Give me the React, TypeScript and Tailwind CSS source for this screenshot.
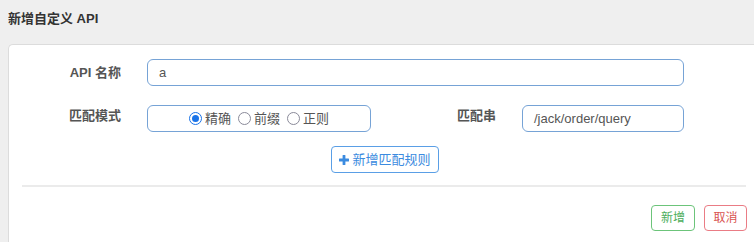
import React from "react";

const font = { fontFamily: '"Liberation Sans", "Noto Sans CJK SC", sans-serif' };

function Radio({ label, checked }: { label: string; checked?: boolean }) {
  return (
    <label className="flex items-center gap-[3px] text-[13px] text-[#555]">
      <span
        className={`flex h-[13px] w-[13px] items-center justify-center rounded-full border ${
          checked ? "border-[#1a73e8]" : "border-[#8a8a99]"
        } bg-white`}
      >
        {checked && <span className="h-[7px] w-[7px] rounded-full bg-[#1a73e8]" />}
      </span>
      {label}
    </label>
  );
}

export default function App() {
  return (
    <div className="h-[242px] w-[754px] overflow-hidden bg-[#efefef]" style={font}>
      {/* 标题 */}
      <div className="h-[44px] pl-[8px] pt-[9px] text-[13px] font-bold text-[#333]">新增自定义 API</div>

      {/* 面板 */}
      <div className="ml-[8px] h-[198px] w-[760px] rounded-tl-[5px] border-l border-t border-[#dcdcdc] bg-white">
        <div className="flex items-center pt-[14px]">
          <div className="w-[112px] text-right text-[13px] font-bold text-[#555]">API 名称</div>
          <div className="ml-[26px] flex h-[27px] w-[537px] items-center rounded-[6px] border border-[#76a3d6] px-[11px] text-[13px] text-[#555]">
            a
          </div>
        </div>

        <div className="mt-[19px] flex items-start">
          <div className="w-[112px] pt-[1px] text-right text-[13px] font-bold text-[#555]">匹配模式</div>
          <div className="ml-[26px] flex h-[27px] w-[224px] items-center justify-center gap-[7px] rounded-[6px] border border-[#76a3d6]">
            <Radio label="精确" checked />
            <Radio label="前缀" />
            <Radio label="正则" />
          </div>
          <div className="w-[125px] pt-[1px] text-right text-[13px] font-bold text-[#555]">匹配串</div>
          <div className="ml-[26px] flex h-[27px] w-[162px] items-center rounded-[6px] border border-[#76a3d6] px-[11px] text-[13px] text-[#555]">
            /jack/order/query
          </div>
        </div>

        <div className="mt-[14px] flex justify-start pl-[322px]">
          <button className="flex h-[27px] w-[108px] items-center justify-center gap-[3px] rounded-[4px] border border-[#5a9fe6] text-[13px] text-[#3b8be0]">
            <svg width="10" height="10" viewBox="0 0 10 10" fill="#3b8be0">
              <rect x="3.6" y="0" width="2.8" height="10" rx="0.5" />
              <rect x="0" y="3.6" width="10" height="2.8" rx="0.5" />
            </svg>
            新增匹配规则
          </button>
        </div>

        <div className="ml-[13px] mt-[12px] h-[2px] w-[724px] bg-[#ebebeb]" />

        <div className="mt-[18px] flex gap-[9px] pl-[642px]">
          <button className="h-[26px] w-[44px] rounded-[4px] border border-[#6cc47a] text-[12px] text-[#4cae5c]">新增</button>
          <button className="h-[26px] w-[43px] rounded-[4px] border border-[#ea7c85] text-[12px] text-[#d9534f]">取消</button>
        </div>
      </div>
    </div>
  );
}
